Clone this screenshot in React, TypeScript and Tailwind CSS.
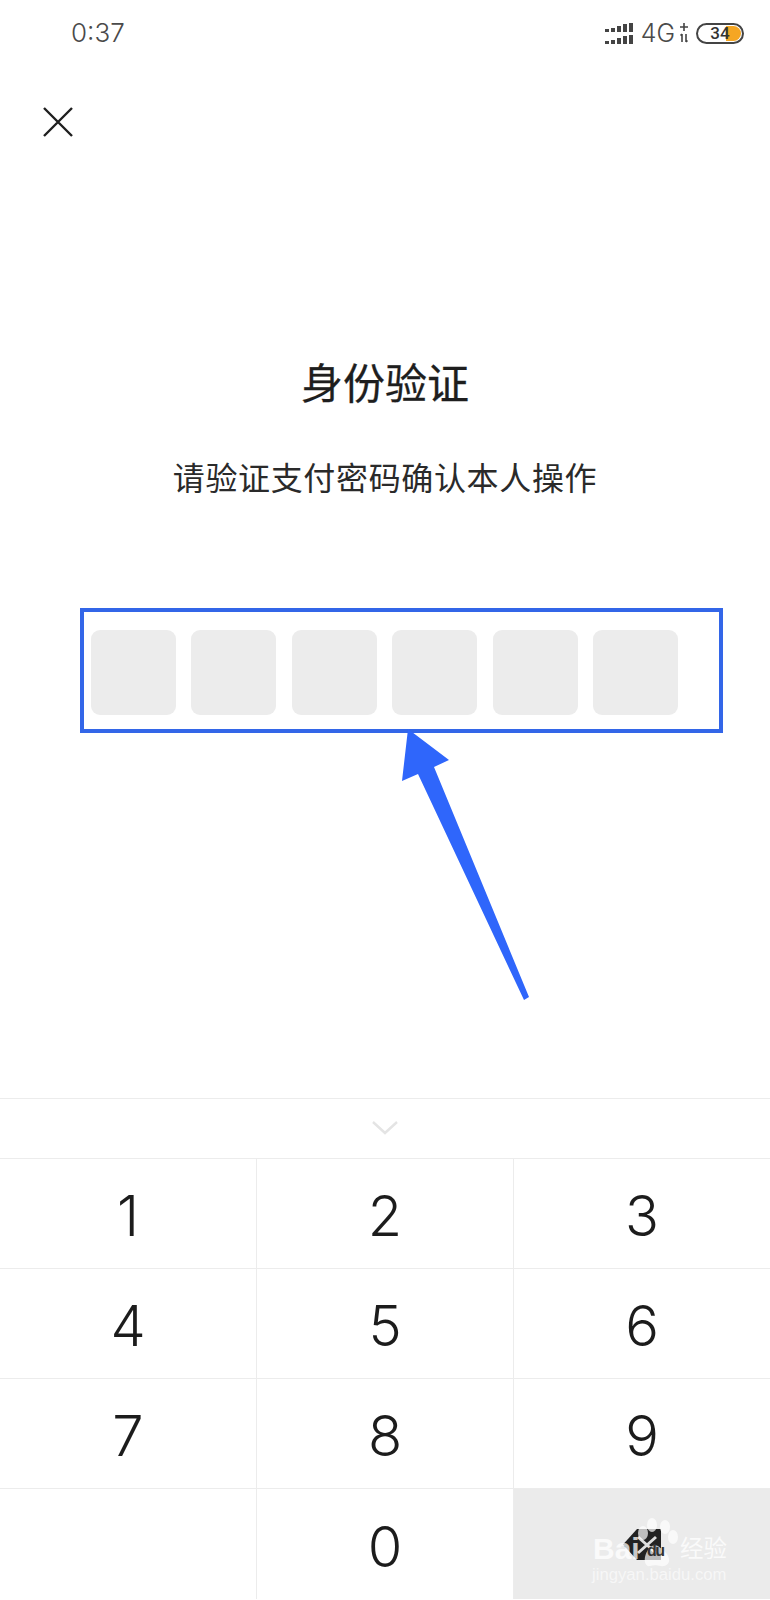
const keys = ["1", "2", "3", "4", "5", "6", "7", "8", "9"];
const font = { fontFamily: '"Noto Sans CJK SC", sans-serif' };

function Signal() {
  const h = [3, 4, 6, 8, 9];
  return (
    <div className="flex flex-col gap-[3px]">
      {[0, 1].map((r) => (
        <div key={r} className="flex items-end gap-[2px]">
          {h.map((v, i) => (
            <div key={i} className="w-[4px] bg-[#444444]" style={{ height: v }} />
          ))}
        </div>
      ))}
    </div>
  );
}

function StatusBar() {
  return (
    <div className="flex h-[66px] items-center justify-between pl-[71px] pr-[26px] text-[#4a4a4a]">
      <span className="font-['Inter',sans-serif] text-[26px] font-light leading-none">0:37</span>
      <div className="flex items-center">
        <Signal />
        <span className="ml-[8px] font-['Inter',sans-serif] text-[25px] font-light leading-none">4G</span>
        <svg width="10" height="22" viewBox="0 0 10 22" className="ml-[4px]" fill="none" stroke="#444444" strokeWidth="1.6">
          <path d="M5 1v8M1 5h8M3 12v8M1.5 13.5 3 12M7 12v8M7 20l1.5-1.5" />
        </svg>
        <div className="relative ml-[7px] flex h-[21px] w-[48px] items-center justify-center overflow-hidden rounded-full border-[2px] border-[#444444]">
          <div className="absolute right-[1px] top-[1px] h-[15px] w-[15px] rounded-r-full bg-[#f5a623]" />
          <span className="relative font-['Roboto',sans-serif] text-[17px] font-medium leading-none text-[#333333]">34</span>
        </div>
      </div>
    </div>
  );
}

function Arrow() {
  return (
    <svg className="absolute left-[400px] top-[727px]" width="135" height="276" viewBox="400 727 135 276">
      <polygon fill="#2f66fb" points="408,729 449,760 434,767 529,997 524,1000 418,774 402,781" />
    </svg>
  );
}

function Watermark() {
  return (
    <div className="absolute left-[590px] top-[1515px] h-[72px] w-[145px] text-white">
      <svg className="absolute left-0 top-0" width="145" height="72" viewBox="0 0 145 72" fill="#ffffff" fillOpacity="0.7">
        <ellipse cx="53" cy="18" rx="5" ry="7" />
        <ellipse cx="62" cy="10" rx="5" ry="7" />
        <ellipse cx="75" cy="12" rx="5" ry="7" />
        <ellipse cx="83" cy="22" rx="5" ry="7" />
        <path d="M55 42c2-9 8-14 13-11 4 3 10 7 11 13 1 5-4 8-8 7-5-1-7-1-11 0-4 1-6-4-5-9z" />
      </svg>
      <span className="absolute left-[3px] top-[19px] font-['Liberation_Sans',sans-serif] text-[30px] font-bold leading-none opacity-75">Bai</span>
      <span className="absolute left-[57px] top-[28px] font-['Liberation_Sans',sans-serif] text-[16px] font-bold leading-none tracking-[-1.5px] text-[#333333]">du</span>
      <span className="absolute left-[90px] top-[21px] text-[23.5px] leading-none opacity-75" style={font}>经验</span>
      <span className="absolute left-[2px] top-[52px] whitespace-nowrap font-['Liberation_Sans',sans-serif] text-[16.7px] leading-none opacity-60">jingyan.baidu.com</span>
    </div>
  );
}

export default function App() {
  return (
    <div className="relative mx-auto h-[1600px] w-[770px] overflow-hidden bg-white" style={font}>
      <StatusBar />
      <div className="ml-[43px] mt-[41px] h-[30px] w-[30px]">
        <svg width="30" height="30" viewBox="0 0 30 30" fill="none" stroke="#1f1f1f" strokeWidth="2.4">
          <path d="M1 1 L29 29 M29 1 L1 29" />
        </svg>
      </div>
      <h1 className="mt-[216px] text-center text-[42px] font-normal leading-[56px] text-[#1e1e1e] [-webkit-text-stroke:0.3px_#1e1e1e]">身份验证</h1>
      <p className="mt-[43px] text-center text-[32px] font-normal leading-[48px] tracking-[0.65px] text-[#2a2a2a]">请验证支付密码确认本人操作</p>
      <div className="ml-[80px] mt-[108px] flex h-[125px] w-[643px] items-start gap-[15.4px] border-[4px] border-[#3366e8] pl-[7px] pt-[18px]">
        {[0, 1, 2, 3, 4, 5].map((i) => (
          <div key={i} className="h-[85px] w-[85px] rounded-[9px] bg-[#ececec]" />
        ))}
      </div>
      <div className="mt-[365px] flex h-[61px] items-center justify-center border-y border-y-[#ececec] pb-[2px]">
        <svg width="26" height="14" viewBox="0 0 26 14" fill="none" stroke="#e4e4e4" strokeWidth="2.4">
          <path d="M1 1 L13 12 L25 1" />
        </svg>
      </div>
      <div className="grid grid-cols-[257px_257px_256px] grid-rows-[110px_110px_110px_110px] font-['Inter',sans-serif] text-[56px] font-light text-[#1c1c1c]">
        {keys.map((k, i) => (
          <div key={k} className={`flex items-center justify-center border-b border-b-[#ececec] pt-[5px] ${i % 3 < 2 ? "border-r border-r-[#ececec]" : ""}`}>
            {k}
          </div>
        ))}
        <div className="border-r border-r-[#ececec]" />
        <div className="flex items-center justify-center border-r border-r-[#ececec] pt-[5px]">0</div>
        <div className="flex items-center justify-center bg-[#ebebeb]">
          <svg width="38" height="31" viewBox="0 0 38 31">
            <path fill="#222222" d="M14 0H38V31H14L0 15.5Z" />
            <path fill="none" stroke="#ffffff" strokeOpacity="0.85" strokeWidth="3" d="M15 8 L33 24 M33 8 L15 24" />
          </svg>
        </div>
      </div>
      <Arrow />
      <Watermark />
    </div>
  );
}
